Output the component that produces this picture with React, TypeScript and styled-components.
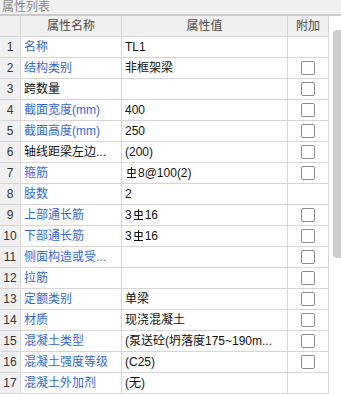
import styled, { createGlobalStyle } from 'styled-components';

const GlobalStyle = createGlobalStyle`
  html, body {
    margin: 0;
    padding: 0;
    background: #ffffff;
  }
  body {
    font-family: "Liberation Sans", "Noto Sans CJK SC", sans-serif;
    font-size: 12px;
  }
`;

const Panel = styled.div`
  width: 341px;
  height: 394px;
  overflow: hidden;
  background: #ffffff;
`;

const TitleBar = styled.div`
  height: 14px;
  overflow: hidden;
  background: #f0f0f0;
  border-bottom: 2px solid #cbcbcb;
  display: flex;
  align-items: center;
  padding-left: 2px;
`;

const TitleText = styled.span`
  font-size: 12px;
  line-height: 14px;
  color: #8a8a8a;
`;

const Body = styled.div`
  display: flex;
`;

const Table = styled.div`
  width: 329px;
  display: flex;
  flex-direction: column;
`;

const Row = styled.div`
  display: grid;
  grid-template-columns: 21px 101px 166px 41px;
  height: 21px;
`;

const Cell = styled.div<{ $head?: boolean; $align?: 'left' | 'center' }>`
  box-sizing: border-box;
  border-right: 1px solid #d6d6d6;
  border-bottom: 1px solid #d6d6d6;
  background: ${p => (p.$head ? '#f0f0f0' : '#ffffff')};
  display: flex;
  align-items: center;
  justify-content: ${p => (p.$align === 'center' ? 'center' : 'flex-start')};
  padding-left: ${p => (p.$align === 'center' ? '0' : '3px')};
  white-space: nowrap;
  overflow: hidden;
  line-height: 20px;
`;

const HeadText = styled.span`
  color: #4a4a4a;
  font-size: 12px;
`;

const NumText = styled.span`
  color: #333333;
  font-size: 12px;
`;

const NameText = styled.span<{ $plain?: boolean }>`
  color: ${p => (p.$plain ? '#111111' : '#3468d8')};
`;

const ValueText = styled.span`
  color: #111111;
  display: inline-flex;
  align-items: center;
`;

const Check = styled.span`
  width: 12px;
  height: 12px;
  border: 1px solid #8c8c8c;
  border-radius: 2px;
  background: #ffffff;
`;

const ScrollTrack = styled.div`
  flex: 1;
  padding-top: 14px;
  padding-left: 4px;
`;

const ScrollThumb = styled.div`
  width: 8px;
  height: 228px;
  background: #cdcdcd;
  border-radius: 4px 0 0 4px;
`;

const RebarIcon = () => (
  <svg width="11" height="12" viewBox="0 0 11 12" style={{ margin: '0 1px 1px 1px' }}>
    <rect x="2" y="2.5" width="7" height="4" fill="none" stroke="#111" strokeWidth="1" />
    <line x1="5.5" y1="0" x2="5.5" y2="10" stroke="#111" strokeWidth="1" />
    <line x1="1" y1="10.5" x2="10" y2="10.5" stroke="#111" strokeWidth="1" />
  </svg>
);

type Prop = {
  name: string;
  plain?: boolean;
  value?: React.ReactNode;
  check: boolean;
};

const props: Prop[] = [
  { name: '名称', value: 'TL1', check: false },
  { name: '结构类别', value: '非框架梁', check: true },
  { name: '跨数量', plain: true, value: '', check: true },
  { name: '截面宽度(mm)', value: '400', check: true },
  { name: '截面高度(mm)', value: '250', check: true },
  { name: '轴线距梁左边...', plain: true, value: '(200)', check: true },
  { name: '箍筋', value: <><RebarIcon />8@100(2)</>, check: true },
  { name: '肢数', value: '2', check: false },
  { name: '上部通长筋', value: <>3<RebarIcon />16</>, check: true },
  { name: '下部通长筋', value: <>3<RebarIcon />16</>, check: true },
  { name: '侧面构造或受...', value: '', check: true },
  { name: '拉筋', value: '', check: true },
  { name: '定额类别', value: '单梁', check: true },
  { name: '材质', value: '现浇混凝土', check: true },
  { name: '混凝土类型', value: '(泵送砼(坍落度175~190m...', check: true },
  { name: '混凝土强度等级', value: '(C25)', check: true },
  { name: '混凝土外加剂', value: '(无)', check: false },
];

export default function App() {
  return (
    <Panel>
      <GlobalStyle />
      <TitleBar>
        <TitleText>属性列表</TitleText>
      </TitleBar>
      <Body>
        <Table>
          <Row>
            <Cell $head $align="center" />
            <Cell $head $align="center"><HeadText>属性名称</HeadText></Cell>
            <Cell $head $align="center"><HeadText>属性值</HeadText></Cell>
            <Cell $head $align="center"><HeadText>附加</HeadText></Cell>
          </Row>
          {props.map((p, i) => (
            <Row key={i}>
              <Cell $head $align="center"><NumText>{i + 1}</NumText></Cell>
              <Cell><NameText $plain={p.plain}>{p.name}</NameText></Cell>
              <Cell><ValueText>{p.value}</ValueText></Cell>
              <Cell $align="center">{p.check && <Check />}</Cell>
            </Row>
          ))}
        </Table>
        <ScrollTrack>
          <ScrollThumb />
        </ScrollTrack>
      </Body>
    </Panel>
  );
}
